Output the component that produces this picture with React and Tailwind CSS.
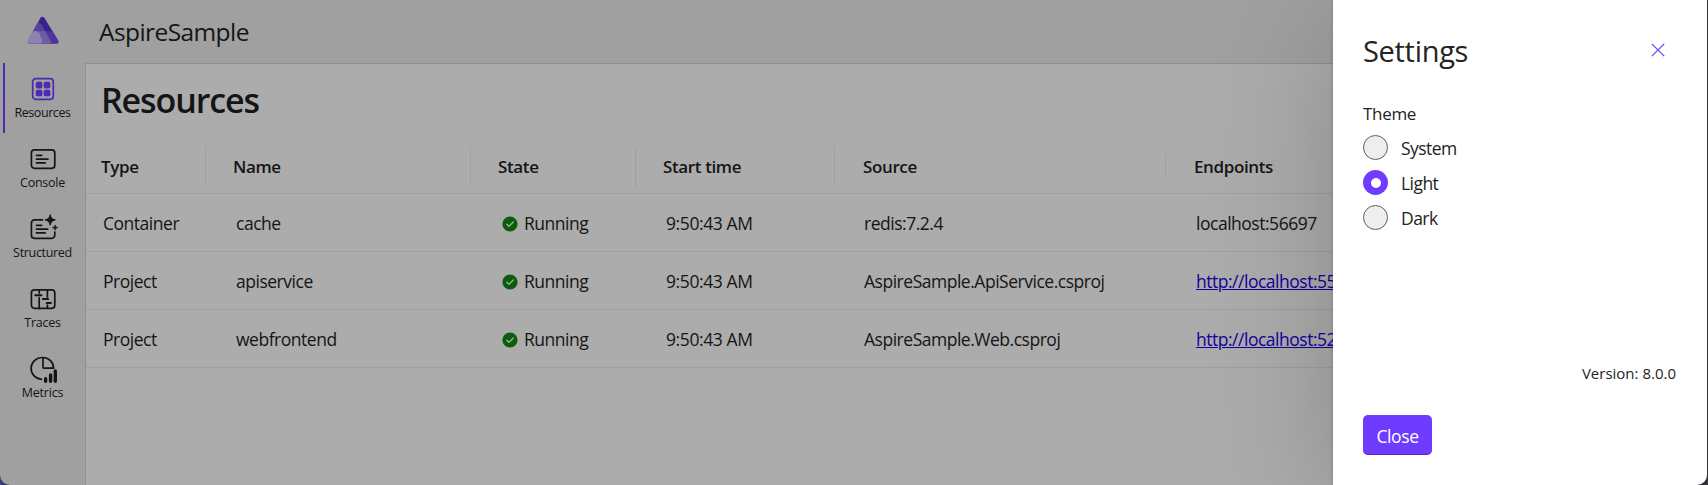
import React from "react";

const NAV = [
  { id: "resources", label: "Resources", tracking: "tracking-[-0.42px]", active: true },
  { id: "console", label: "Console", tracking: "tracking-[-0.25px]" },
  { id: "structured", label: "Structured", tracking: "tracking-[-0.32px]" },
  { id: "traces", label: "Traces", tracking: "tracking-[-0.25px]" },
  { id: "metrics", label: "Metrics", tracking: "tracking-[-0.2px]" },
];

const ROWS = [
  { type: "Container", name: "cache", source: "redis:7.2.4", endpoint: "localhost:56697", link: false },
  { type: "Project", name: "apiservice", source: "AspireSample.ApiService.csproj", endpoint: "http://localhost:5525", link: true },
  { type: "Project", name: "webfrontend", source: "AspireSample.Web.csproj", endpoint: "http://localhost:5218", link: true },
];

const COLS = "grid grid-cols-[120px_265px_165px_199px_331px_1fr]";

function Logo() {
  return (
    <svg width="32" height="28" viewBox="0.3 0 31 27.5" preserveAspectRatio="none">
      <path d="M13.4 1.7 Q15.2 -0.4 17.1 1.7 L30.6 24.4 Q31.4 27 28.6 27 H3 Q0.2 27 1.4 24.2 Z" fill="#3b2190" />
      <path d="M18.5 15 L25 15 L30.6 24.4 Q31.4 27 28.6 27 H21 Z" fill="#4f3499" />
      <path d="M9.8 7.6 Q11.4 5.6 13.6 7.8 Q16 9.4 17.5 14 L22.9 24 Q24.4 27 21.6 27 H3 Q0.2 27 1.4 24.2 Z" fill="#56429b" />
      <path d="M6 14.8 H17.8 L22.9 24 Q24.4 27 21.6 27 H3 Z" fill="#6d5ba6" />
      <path d="M5.2 16.1 Q6.6 14.6 9 14.9 Q11.3 15.2 12.2 17 L14.8 23.2 Q15.8 27 12.4 27 H3 Q0.2 27 1.4 23.8 Z" fill="#8c82ab" />
    </svg>
  );
}

function NavIcon({ id }) {
  const stroke = { fill: "none", stroke: "currentColor", strokeWidth: 1.7, strokeLinecap: "round" };
  if (id === "resources")
    return (
      <svg width="28" height="28" viewBox="0 0 28 28">
        <rect x="3.7" y="3.7" width="20.6" height="20.6" rx="3" {...stroke} />
        <rect x="6.8" y="6.8" width="6.6" height="6.6" rx="1.9" fill="currentColor" />
        <rect x="14.7" y="6.8" width="6.6" height="6.6" rx="1.9" fill="currentColor" />
        <rect x="6.8" y="14.7" width="6.6" height="6.6" rx="1.9" fill="currentColor" />
        <rect x="14.7" y="14.7" width="6.6" height="6.6" rx="1.9" fill="currentColor" />
      </svg>
    );
  if (id === "console")
    return (
      <svg width="28" height="28" viewBox="0 0 28 28">
        <rect x="2.4" y="4.9" width="23.4" height="18.4" rx="3" {...stroke} />
        <path d="M7.5 10.3h5.2M7.5 14.1h11.5M7.5 17.9h8.7" {...stroke} />
      </svg>
    );
  if (id === "structured")
    return (
      <svg width="28" height="28" viewBox="0 0 28 28" overflow="visible">
        <path d="M13.5 4.9H5.4a3 3 0 0 0-3 3v12.4a3 3 0 0 0 3 3h17.4a3 3 0 0 0 3-3v-3.1" {...stroke} />
        <path d="M7.5 10.3h5.2M7.5 14.1h11.2M7.5 17.9h8.7" {...stroke} />
        <path d="M21.2 -0.4C22 3 23 4.1 26.4 4.9C23 5.7 22 6.8 21.2 10.2C20.4 6.8 19.4 5.7 16 4.9C19.4 4.1 20.4 3 21.2 -0.4Z" fill="currentColor" stroke="currentColor" strokeWidth=".9" strokeLinejoin="round" />
        <path d="M26.1 9.9C26.5 11.7 27 12.2 28.8 12.6C27 13 26.5 13.5 26.1 15.3C25.7 13.5 25.2 13 23.4 12.6C25.2 12.2 25.7 11.7 26.1 9.9Z" fill="currentColor" stroke="currentColor" strokeWidth=".7" strokeLinejoin="round" />
      </svg>
    );
  if (id === "traces")
    return (
      <svg width="28" height="28" viewBox="0 0 28 28">
        <rect x="2.4" y="4.9" width="23.4" height="18.4" rx="3" {...stroke} />
        <path d="M10.2 5v3M10.2 12.7v10.6M18.4 5v7M18.4 20v3" {...stroke} />
        <path d="M6.3 10.3h6.2M13.9 14.1h5.2M17.7 17.9h4.2" {...stroke} strokeWidth="2" />
      </svg>
    );
  return (
    <svg width="28" height="28" viewBox="0 0 28 28">
      <path d="M24.6 13.2C24.6 7.2 19.9 2.5 13.6 2.5A10.9 10.9 0 0 0 12.4 24.3M14 2.5V12.2a1 1 0 0 0 1 1H24.6" {...stroke} />
      <path d="M16.6 23.8v2.4M21.6 19.9v6.3M26.3 16v10.2" stroke="currentColor" strokeWidth="3.4" strokeLinecap="round" />
    </svg>
  );
}

function CheckBadge() {
  return (
    <svg width="16" height="16" viewBox="0 0 16 16">
      <circle cx="8" cy="8" r="7.6" fill="#0b5c0b" />
      <path d="M4.8 8.2 7 10.3 11.2 6" fill="none" stroke="#b0b0b0" strokeWidth="1.2" strokeLinecap="round" strokeLinejoin="round" />
    </svg>
  );
}

function HeadCell({ children, last, short, pad }) {
  return (
    <div className={`flex items-center ${pad}`}>
      <span className="flex-1 text-[17px] leading-6 font-semibold tracking-[-0.38px]">{children}</span>
      {!last && <span className={`w-px bg-[#a0a0a0] ${short ? "h-[25px]" : "h-10"}`} />}
    </div>
  );
}

function Radio({ label, checked }) {
  return (
    <label className="flex h-[35px] items-center gap-[13px]">
      {checked ? (
        <span className="flex size-[25px] items-center justify-center rounded-full bg-[#6f3cff]">
          <span className="size-[10px] rounded-full bg-white" />
        </span>
      ) : (
        <span className="size-[25px] rounded-full border border-[#606060] bg-[#eeeeee]" />
      )}
      <span className="pt-px text-[17.5px] leading-6 tracking-[-0.55px]">{label}</span>
    </label>
  );
}

export default function App() {
  return (
    <div className="h-[485px] w-[1708px] overflow-hidden bg-[#3b3a80] font-['Open_Sans','Noto_Sans',sans-serif] text-[#151515]">
      <div className="relative flex h-full overflow-hidden rounded-bl-[10px] bg-[#a0a0a0]">
        <aside className="flex w-[85px] shrink-0 flex-col">
          <div className="flex h-[63px] items-start justify-center pt-4 pl-px">
            <Logo />
          </div>
          {NAV.map((n) => (
            <div
              key={n.id}
              className={`ml-[3px] flex h-[70px] flex-col items-center border-l-2 pt-3 pr-[5px] ${n.active ? "border-[#4e2ab2] text-[#4e2ab2]" : "border-transparent"}`}
            >
              <NavIcon id={n.id} />
              <span className={`pt-px text-[12.5px] leading-[18px] text-[#151515] ${n.tracking}`}>{n.label}</span>
            </div>
          ))}
        </aside>
        <div className="flex flex-1 flex-col">
          <header className="flex h-[63px] items-center pt-[2px] pl-[14px] text-[24.5px] tracking-[-0.58px]">AspireSample</header>
          <main className="flex-1 border-t border-l border-[#909090] bg-[#acacac]">
            <h1 className="h-[79px] pt-[13px] pl-[15px] text-[34px] leading-[46px] font-semibold tracking-[-1.1px]">Resources</h1>
            <div className={`${COLS} h-[51px] border-b border-[#9e9e9e] pb-[3px]`}>
              <HeadCell pad="pl-[15px]">Type</HeadCell>
              <HeadCell pad="pl-[27px]">Name</HeadCell>
              <HeadCell pad="pl-[27px]">State</HeadCell>
              <HeadCell pad="pl-[27px]">Start time</HeadCell>
              <HeadCell pad="pl-[28px]" short>Source</HeadCell>
              <HeadCell pad="pl-[28px]" last>Endpoints</HeadCell>
            </div>
            {ROWS.map((r) => (
              <div key={r.name} className={`${COLS} h-[58px] items-center border-b border-[#9e9e9e] pt-[2px] text-[17.5px] tracking-[-0.48px] whitespace-nowrap`}>
                <span className="pl-[17px]">{r.type}</span>
                <span className="pl-[30px]">{r.name}</span>
                <span className="flex items-center gap-[6px] pl-[31px]">
                  <CheckBadge />
                  Running
                </span>
                <span className="pl-[30px] tracking-[-0.4px]">9:50:43 AM</span>
                <span className="pl-[29px]">{r.source}</span>
                <span className="pl-[30px]">
                  <span className={r.link ? "text-[#12009a] underline" : ""}>{r.endpoint}</span>
                </span>
              </div>
            ))}
          </main>
        </div>
      </div>
      <div className="absolute top-0 left-[1333px] flex h-[485px] w-[375px] bg-[#303036] shadow-[0_26px_120px_rgba(0,0,0,0.2),0_0_4px_rgba(0,0,0,0.2)]">
        <section className="flex w-[374px] flex-col rounded-br-[10px] bg-white pl-[30px] text-[#242424]">
          <div className="flex h-[96px] items-center justify-between pt-[6px] pr-[42px]">
            <h2 className="text-[29px] leading-9 tracking-[-0.3px]">Settings</h2>
            <svg width="14" height="14" viewBox="0 0 14 14" className="mb-[2px]">
              <path d="M.8.8l12.4 12.4M13.2.8L.8 13.2" stroke="#6f3cff" strokeWidth="1.2" />
            </svg>
          </div>
          <div className="pt-[6px] text-[17px] leading-6 tracking-[-0.3px]">Theme</div>
          <div className="pt-1">
            <Radio label="System" />
            <Radio label="Light" checked />
            <Radio label="Dark" />
          </div>
          <div className="mt-auto pr-[31px] text-right text-[15px] leading-5 tracking-[0px]">Version: 8.0.0</div>
          <button className="mt-[32px] mb-[30px] flex h-10 w-[69px] items-center justify-center rounded-[5px] border-b border-[#5226c4] bg-[#6f3cff] pt-[3px] text-[17.5px] tracking-[-0.4px] text-white">
            Close
          </button>
        </section>
      </div>
    </div>
  );
}
